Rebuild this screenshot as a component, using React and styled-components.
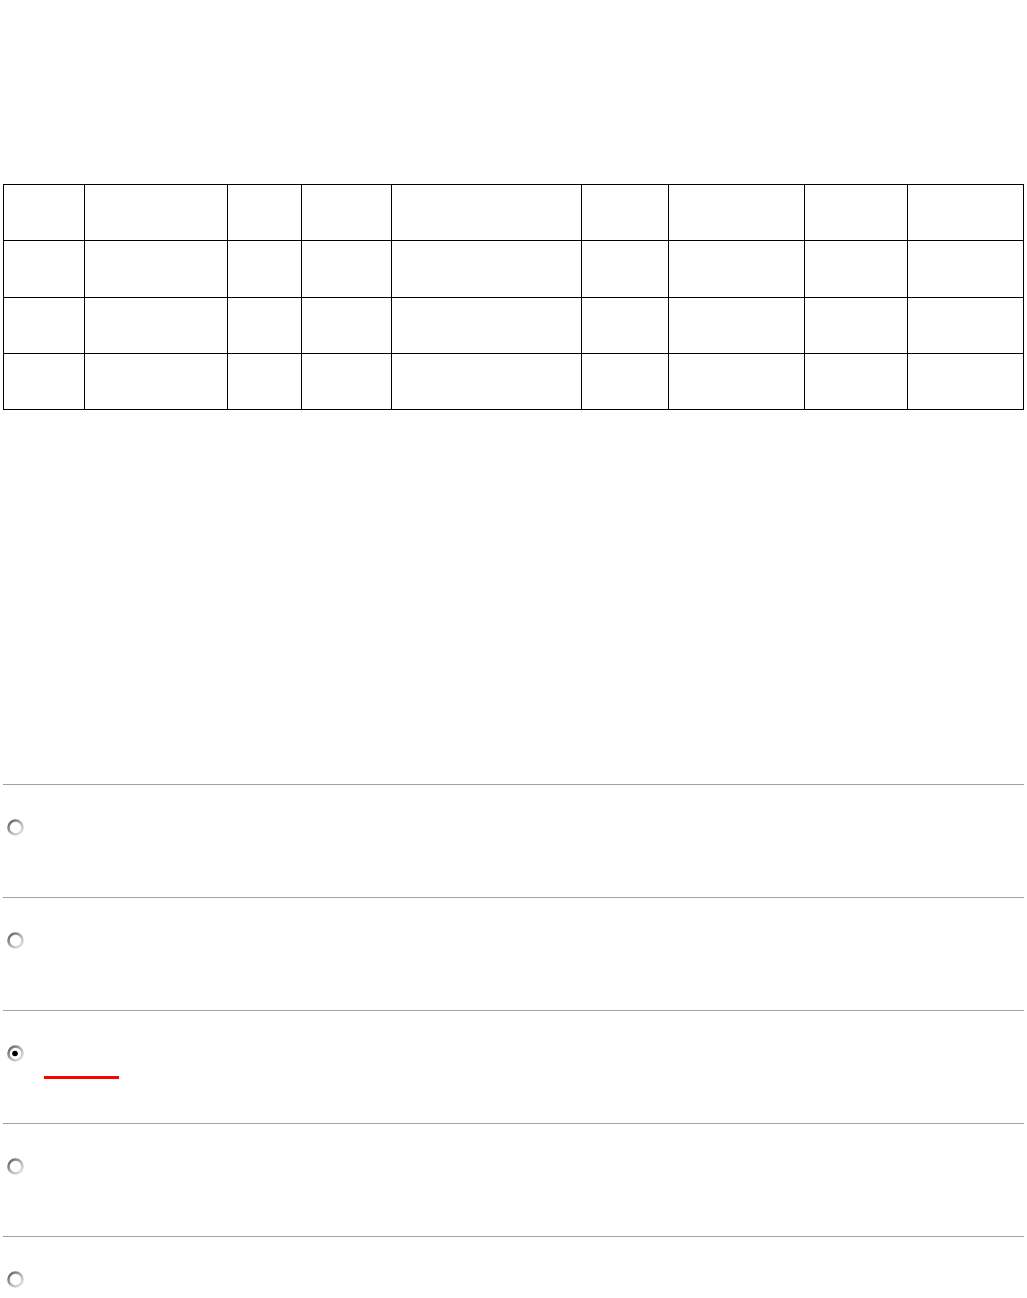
import React from "react";
import styled, { createGlobalStyle } from "styled-components";

const GlobalStyle = createGlobalStyle`
  html, body {
    margin: 0;
    padding: 0;
    background: #ffffff;
    font-family: "Liberation Sans", Arial, sans-serif;
  }
`;

const Page = styled.div`
  width: 1027px;
  height: 1298px;
  overflow: hidden;
  padding: 184px 3px 0 3px;
  box-sizing: border-box;
`;

const Grid = styled.table`
  width: 1021px;
  border-collapse: collapse;
  table-layout: fixed;
`;

const Cell = styled.td`
  border: 1px solid #000;
  height: ${(p) => p.$h}px;
  padding: 0;
`;

const Options = styled.div`
  margin-top: 374px;
  width: 1021px;
`;

const Option = styled.div`
  border-top: 1px solid #a0a0a0;
  height: 113px;
  padding: 33px 0 0 3px;
  box-sizing: border-box;
`;

const Marker = styled.div`
  width: 75px;
  height: 3px;
  background: #ff0000;
  margin: 13px 0 0 38px;
`;

const columns = [81, 143, 74, 90, 190, 87, 136, 103, 116];
const rowHeights = [55, 56, 55, 55];

const Radio = ({ checked, id }) => (
  <svg width="19" height="19" viewBox="0 0 19 19" style={{ display: "block" }}>
    <defs>
      <linearGradient id={id} x1="0" y1="0" x2="1" y2="1">
        <stop offset="0" stopColor="#5a5a5a" />
        <stop offset="0.45" stopColor="#a8a8a8" />
        <stop offset="1" stopColor="#ececec" />
      </linearGradient>
    </defs>
    <circle cx="9.5" cy="9.5" r="7" fill="#fff" stroke={`url(#${id})`} strokeWidth="2.6" />
    {checked && <circle cx="9" cy="9.5" r="2.8" fill="#000" />}
  </svg>
);

export default function App() {
  const options = [false, false, true, false, false];
  return (
    <Page>
      <GlobalStyle />
      <Grid>
        <colgroup>
          {columns.map((w, i) => (
            <col key={i} style={{ width: w }} />
          ))}
        </colgroup>
        <tbody>
          {rowHeights.map((h, r) => (
            <tr key={r}>
              {columns.map((_, i) => (
                <Cell key={i} $h={h} />
              ))}
            </tr>
          ))}
        </tbody>
      </Grid>
      <Options>
        {options.map((checked, i) => (
          <Option key={i}>
            <Radio checked={checked} id={`radio-grad-${i}`} />
            {checked && <Marker />}
          </Option>
        ))}
      </Options>
    </Page>
  );
}
